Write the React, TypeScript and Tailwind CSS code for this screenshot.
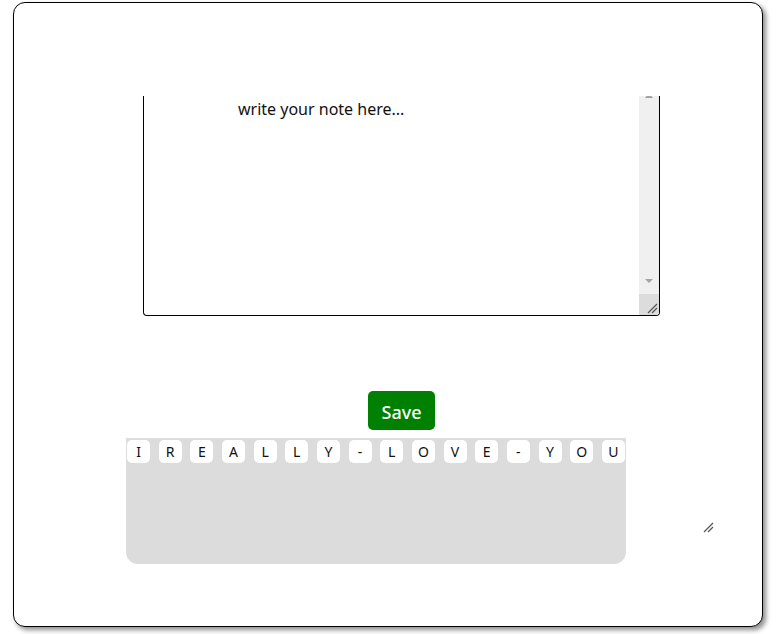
import React from "react";

const letters = ["I", "R", "E", "A", "L", "L", "Y", "-", "L", "O", "V", "E", "-", "Y", "O", "U"];

function Grip({ className }: { className?: string }) {
  return (
    <svg className={className} width="11" height="11" viewBox="0 0 11 11">
      <line x1="1" y1="10" x2="10" y2="1" stroke="#555" strokeWidth="1.2" />
      <line x1="5" y1="10" x2="10" y2="5" stroke="#555" strokeWidth="1.2" />
    </svg>
  );
}

export default function App() {
  return (
    <div className="w-[777px] h-[634px] bg-white" style={{ fontFamily: '"Noto Sans", "Open Sans", sans-serif' }}>
      <div className="relative ml-[13px] mt-[2px] w-[750px] h-[625px] border border-black rounded-[12px] shadow-[3px_3px_5px_rgba(0,0,0,0.45)] bg-white flex flex-col pt-[93px]">
        {/* textarea */}
        <div className="ml-[129px] w-[517px] h-[220px] border-l border-r border-b border-black rounded-b-[4px] flex overflow-hidden">
          <div className="flex-1 pl-[94px] pt-[1px] text-[16px] leading-[24px] text-[#111]">write your note here...</div>
          <div className="w-[20px] bg-[#f0f0f0] flex flex-col">
            <div className="relative h-[8px] overflow-visible">
              <div className="absolute left-[6px] top-[-3px] w-0 h-0 border-l-[4px] border-r-[4px] border-b-[5px] border-l-transparent border-r-transparent border-b-[#a3a3a3]" />
            </div>
            <div className="flex-1" />
            <div className="h-[18px] flex justify-center items-start pt-[3px]">
              <div className="w-0 h-0 border-l-[4px] border-r-[4px] border-t-[4px] border-l-transparent border-r-transparent border-t-[#a3a3a3]" />
            </div>
            <div className="h-[21px] bg-[#dcdcdc] flex items-end justify-end pr-[1px] pb-[1px]">
              <Grip />
            </div>
          </div>
        </div>

        {/* save */}
        <button className="mt-[75px] ml-[354px] w-[67px] h-[39px] bg-[#008000] rounded-[5px] text-white text-[18px] font-medium leading-none flex items-center justify-center pt-[3px]">
          Save
        </button>

        {/* strip */}
        <div className="mt-[8px] ml-[112px] w-[500px] h-[126px] bg-[#dcdcdc] rounded-b-[12px] px-[1px] pt-[2px] flex justify-between items-start">
          {letters.map((l, i) => (
            <div
              key={i}
              className="w-[23px] h-[23px] bg-white rounded-[5px] flex items-center justify-center text-[14px] text-[#111]"
            >
              {l}
            </div>
          ))}
        </div>

        <Grip className="absolute left-[689px] top-[519px]" />
      </div>
    </div>
  );
}
